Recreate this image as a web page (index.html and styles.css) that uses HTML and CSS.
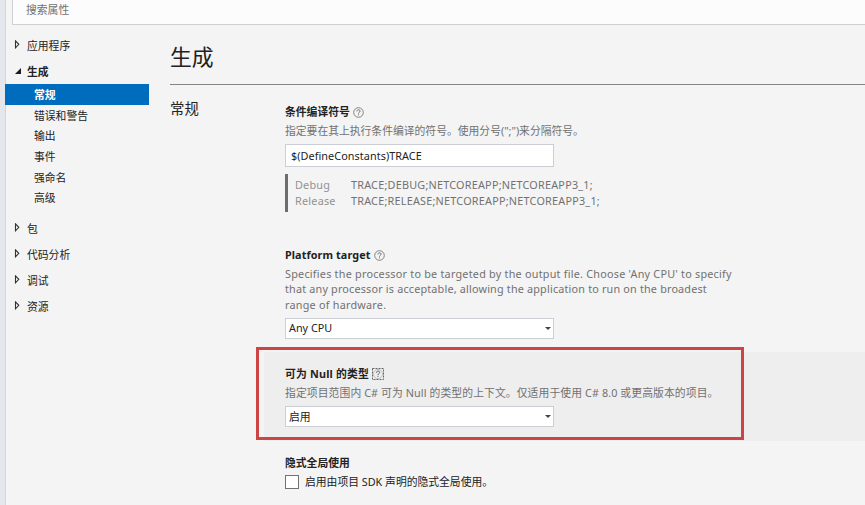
FILE: index.html
```html
<!DOCTYPE html>
<html lang="zh-CN">
<head>
<meta charset="utf-8">
<title>生成</title>
<link rel="stylesheet" href="styles.css">
</head>
<body>
<svg width="0" height="0" class="defs">
  <symbol id="help" viewBox="0 0 11 11"><circle cx="5.5" cy="5.5" r="4.8" fill="none" stroke="#777" stroke-width=".9"/><path d="M3.9 4.4C3.9 2.3 7.1 2.3 7.1 4.2C7.1 5.3 5.5 5.2 5.5 6.6M5.5 7.4V8.4" fill="none" stroke="#666" stroke-width=".95"/></symbol>
  <symbol id="help-focus" viewBox="0 0 12 12"><rect x=".5" y=".5" width="11" height="11" fill="none" stroke="#666" stroke-width="1" stroke-dasharray="2 1"/><circle cx="6" cy="6" r="4.6" fill="none" stroke="#aaa" stroke-width=".7"/><path d="M4.4 4.7C4.4 2.6 7.6 2.6 7.6 4.5C7.6 5.6 6 5.5 6 6.9M6 7.8V8.8" fill="none" stroke="#555" stroke-width="1"/></symbol>
  <symbol id="closed" viewBox="0 0 6 9"><path d="M1.5 .9L4.8 4.3L1.5 7.8Z" fill="none" stroke="#333" stroke-width="1.1"/></symbol>
  <symbol id="open" viewBox="0 0 6 6"><path d="M6 0V6H0Z" fill="#1b1b1b"/></symbol>
</svg>
<div class="window">
  <div class="search">搜索属性</div>
  <div class="columns">
    <nav class="tree">
      <div class="node"><svg class="closed"><use href="#closed"/></svg>应用程序</div>
      <div class="node active"><svg class="open"><use href="#open"/></svg>生成</div>
      <div class="children">
        <div class="leaf selected">常规</div>
        <div class="leaf">错误和警告</div>
        <div class="leaf">输出</div>
        <div class="leaf">事件</div>
        <div class="leaf">强命名</div>
        <div class="leaf">高级</div>
      </div>
      <div class="node"><svg class="closed"><use href="#closed"/></svg>包</div>
      <div class="node"><svg class="closed"><use href="#closed"/></svg>代码分析</div>
      <div class="node"><svg class="closed"><use href="#closed"/></svg>调试</div>
      <div class="node"><svg class="closed"><use href="#closed"/></svg>资源</div>
    </nav>
    <main>
      <h1>生成</h1>
      <div class="section">
        <h2>常规</h2>
        <div class="fields">
          <section class="field symbols">
            <h3>条件编译符号<svg class="help"><use href="#help"/></svg></h3>
            <p class="desc">指定要在其上执行条件编译的符号。使用分号(";")来分隔符号。</p>
            <div class="box input"><span>$(DefineConstants)TRACE</span></div>
            <div class="values">
              <span>Debug</span><span>TRACE;DEBUG;NETCOREAPP;NETCOREAPP3_1;</span>
              <span>Release</span><span>TRACE;RELEASE;NETCOREAPP;NETCOREAPP3_1;</span>
            </div>
          </section>
          <section class="field platform">
            <h3><span class="latin-title">Platform target</span><svg class="help"><use href="#help"/></svg></h3>
            <p class="desc english">Specifies the processor to be targeted by the output file. Choose 'Any CPU' to specify<br><span class="tight">that any processor is acceptable, allowing the application to run on the broadest</span><br>range of hardware.</p>
            <div class="box select">Any CPU<i class="arrow"></i></div>
          </section>
          <section class="field nullable">
            <h3><span class="mixed-title">可为 Null 的类型</span><svg class="focus"><use href="#help-focus"/></svg></h3>
            <p class="desc mixed">指定项目范围内 C# 可为 Null 的类型的上下文。仅适用于使用 C# 8.0 或更高版本的项目。</p>
            <div class="box select">启用<i class="arrow"></i></div>
            <div class="highlight"></div>
          </section>
          <section class="field implicit">
            <h3>隐式全局使用</h3>
            <div class="check"><i class="checkbox"></i><span>启用由项目 SDK 声明的隐式全局使用。</span></div>
          </section>
        </div>
      </div>
    </main>
  </div>
</div>
</body>
</html>
```
FILE: styles.css
```css
* { box-sizing: border-box; }
body {
  margin: 0;
  width: 865px;
  height: 505px;
  overflow: hidden;
  background: #f4f4f4;
  color: #222;
  font: 10.8px/18px "Noto Sans", "Noto Sans CJK SC", sans-serif;
  white-space: nowrap;
}
.defs { position: absolute; }
h1, h2, h3, p { margin: 0; font-weight: 400; }
svg { flex: none; }
.window { height: 505px; border-left: 5px solid #e6e7ed; box-shadow: inset 1px 0 #d2d3dc; }
.search {
  height: 25px;
  margin-left: 7px;
  padding-left: 13px;
  border: 1px solid #cfcfd2;
  border-width: 0 0 1px 1px;
  background: #fcfcfc;
  color: #717171;
  line-height: 19px;
}
.columns { display: flex; }
.tree { width: 144px; padding-top: 7px; }
.node { display: flex; align-items: center; height: 26px; padding: 1px 0 0 9px; }
.active { font-weight: 700; }
.closed { width: 6px; height: 9px; margin: -2px 7px 0 0; }
.open { width: 6px; height: 6px; margin: -1px 6px 0 1px; }
.children { padding-bottom: 7px; }
.leaf { height: 20.7px; padding-left: 29px; line-height: 21.2px; }
.selected { background: #006cbe; color: #fff; font-weight: 700; }
main { flex: 1; margin-left: 21px; }
h1 { height: 60px; border-bottom: 1px solid #858585; font-size: 21.8px; line-height: 64px; }
.section { display: flex; }
h2 { width: 94px; padding-top: 12px; font-size: 14.4px; line-height: 24px; }
.fields { flex: 1; }
.field { padding-left: 21px; }
h3 { display: flex; align-items: center; height: 18px; font-size: 10.8px; font-weight: 700; }
.help { width: 11px; height: 11px; margin-left: 3px; }
.latin-title { letter-spacing: .1px; }
.mixed-title { letter-spacing: .2px; }
.focus { width: 12px; height: 12px; margin-left: 3px; }
.desc { margin-top: 1px; color: #717171; }
.mixed { letter-spacing: .1px; }
.box { display: flex; align-items: center; width: 269px; border: 1px solid #ccced6; background: #fff; }
.input { height: 23px; margin-top: 4px; padding-left: 5px; letter-spacing: .08px; }
.select { height: 21px; justify-content: space-between; padding: 0 2px 0 3px; }
.arrow { border: 3px solid transparent; border-top-color: #444; border-bottom: 0; }
.symbols { height: 161px; padding-top: 18px; }
.values {
  display: grid;
  grid-template-columns: 56px 1fr;
  align-content: start;
  width: 330px;
  height: 38px;
  margin-top: 7px;
  padding: 3px 0 0 7px;
  border-left: 3px solid #6d6d6d;
  color: #717171;
  line-height: 16px;
  letter-spacing: .24px;
}
.values span:nth-child(odd) { color: #929292; }
.platform { height: 106px; }
.english { margin: 2px 0 6px; line-height: 15.3px; letter-spacing: .24px; }
.tight { letter-spacing: .19px; }
.nullable { position: relative; height: 89px; padding-top: 13px; background: #eee; }
.nullable .select { margin-top: 4px; }
.highlight { position: absolute; left: -8px; top: -5px; width: 488px; height: 93px; border: 3px solid #cc4444; }
.implicit { padding-top: 13px; }
.check { display: flex; align-items: center; height: 20px; }
.checkbox { width: 14px; height: 14px; margin-right: 6px; border: 1px solid #717171; background: #fff; }
```
